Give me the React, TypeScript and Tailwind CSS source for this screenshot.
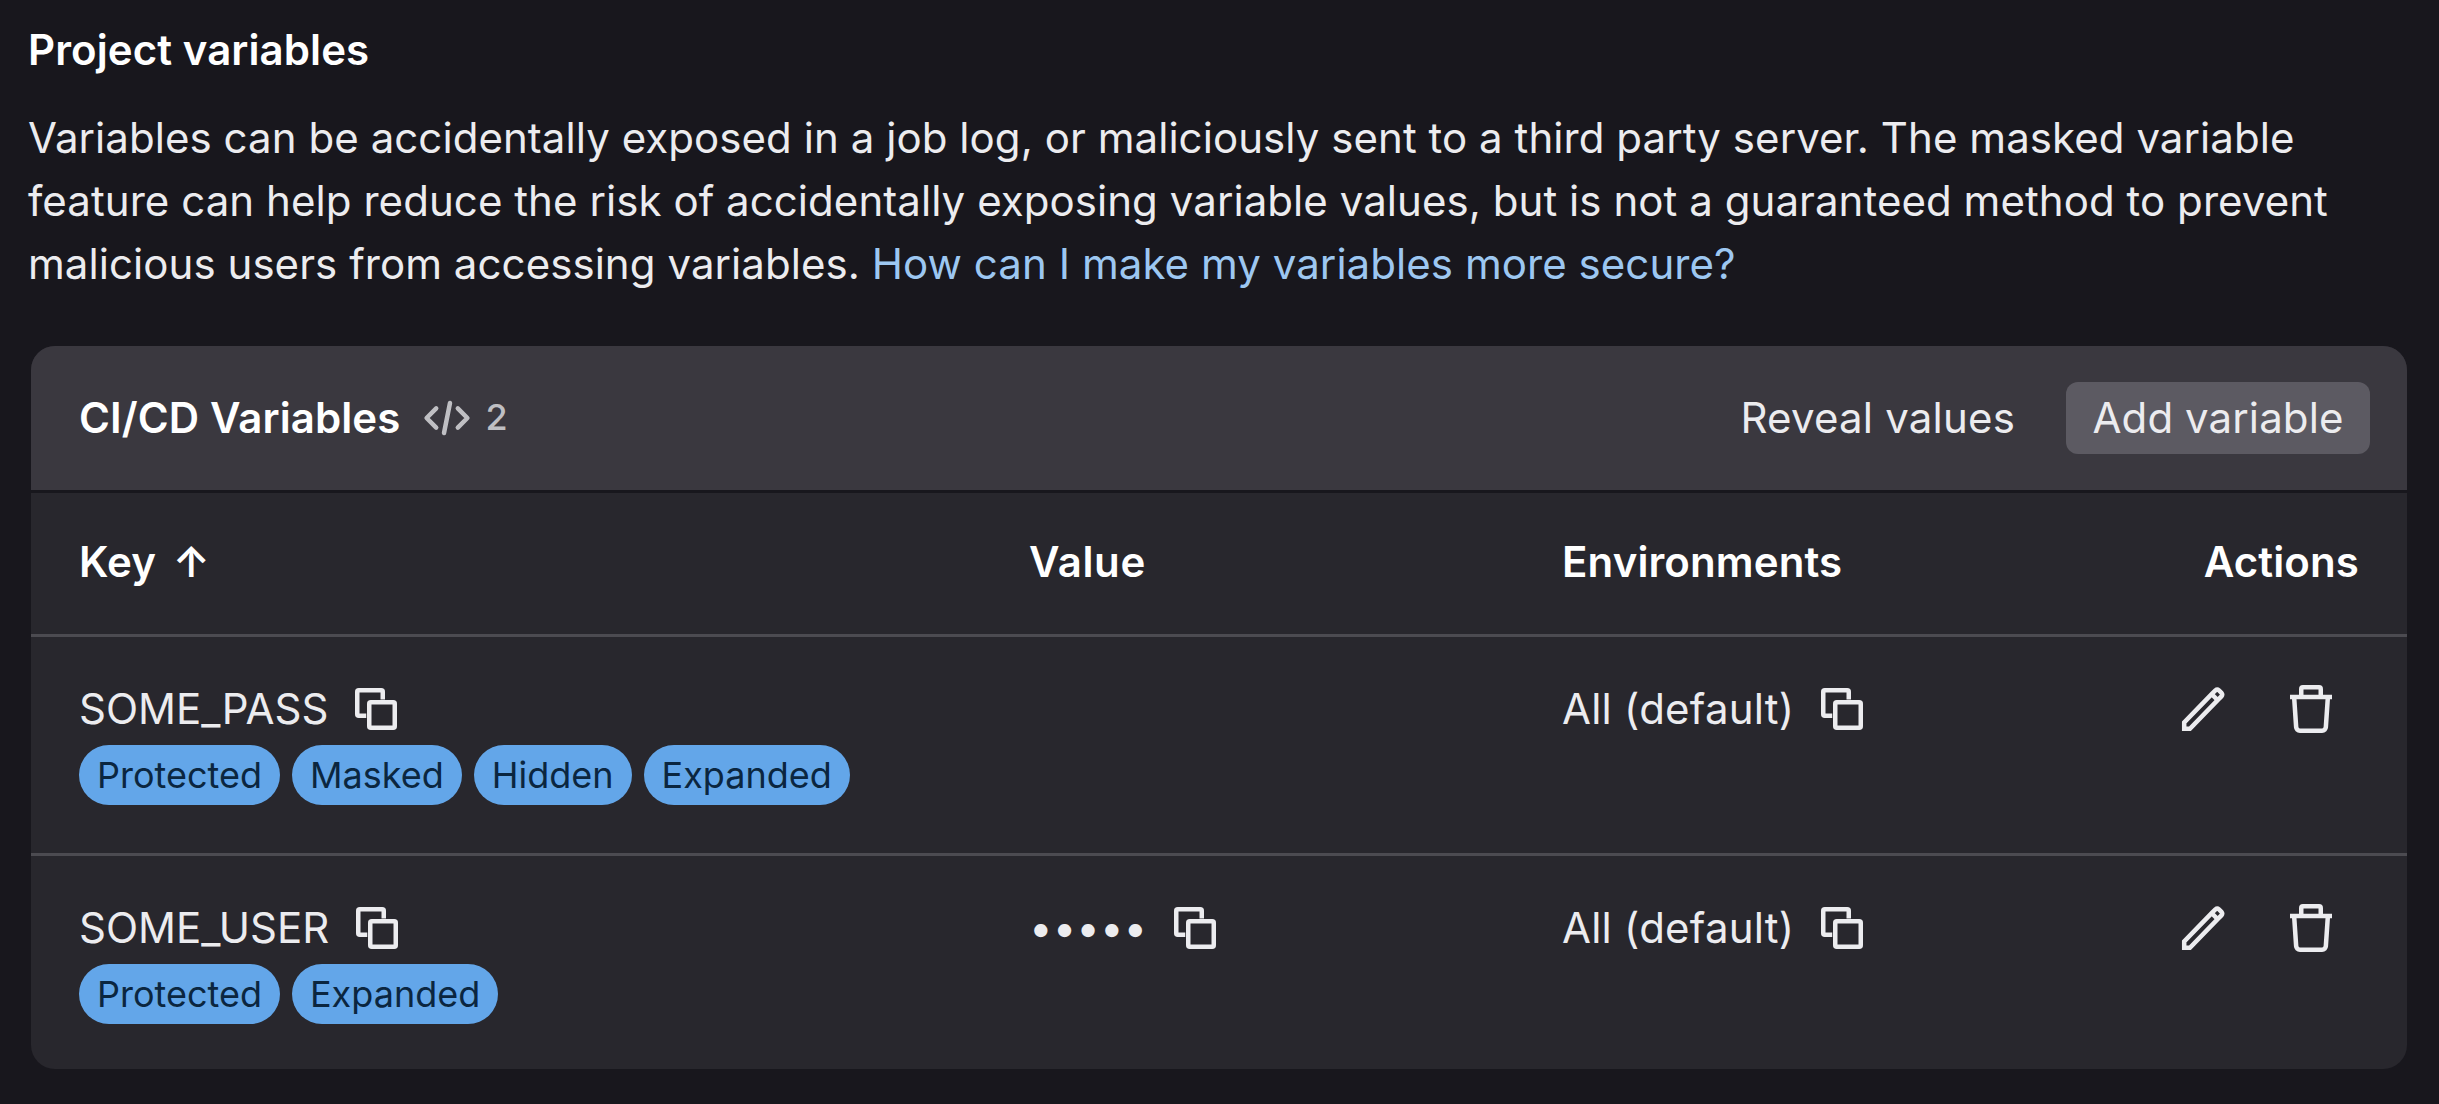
import React from "react";

function CopyIcon() {
  return (
    <svg viewBox="0 0 16 16" fill="none" stroke="#ececef" strokeWidth="1.5" className="w-[48px] h-[48px] shrink-0">
      <rect x="5.75" y="5.75" width="8.5" height="8.5" rx="0.5" />
      <path d="M10.25 4.8V2.25a.5.5 0 0 0-.5-.5h-7.5a.5.5 0 0 0-.5.5v7.5c0 .3.2.5.5.5h2.5" />
    </svg>
  );
}

function PencilIcon() {
  return (
    <svg viewBox="0 0 16 16" fill="none" stroke="#ececef" strokeWidth="1.5" className="w-[48px] h-[48px] shrink-0">
      <path d="M1.4 14.6v-2.1l9.4-9.7 1-1c.4-.35.8-.35 1.2 0l.8.8c.35.4.35.8 0 1.2l-1 1-9.5 9.8H1.4Z" strokeLinejoin="miter" />
      <path d="M10.5 3l2.4 2.4" />
    </svg>
  );
}

function TrashIcon() {
  return (
    <svg viewBox="0 0 16 16" fill="none" stroke="#ececef" strokeWidth="1.5" className="w-[48px] h-[48px] shrink-0">
      <path d="M4.75 3.9V1.3c0-.3.2-.55.55-.55h5.4c.35 0 .55.25.55.55v2.6" />
      <path d="M1 4h14" />
      <path d="M2.4 4.4l.65 9.6c.05.7.55 1.25 1.25 1.25h7.4c.7 0 1.2-.55 1.25-1.25l.65-9.6" />
    </svg>
  );
}

function CodeIcon() {
  return (
    <svg viewBox="0 0 16 16" fill="none" stroke="#bfbfc3" strokeWidth="1.5" strokeLinecap="round" strokeLinejoin="round" className="w-[48px] h-[48px] shrink-0">
      <path d="M4.4 4.8L1.2 8l3.2 3.2" />
      <path d="M11.6 4.8L14.8 8l-3.2 3.2" />
      <path d="M9 3L7 13" />
    </svg>
  );
}

function Badge({ label }: { label: string }) {
  return (
    <span className="h-[60px] px-[18px] rounded-full bg-[#63a6e9] text-[#0b2640] text-[36px] leading-[60px]">
      {label}
    </span>
  );
}

function Row({
  name,
  badges,
  value,
  last,
}: {
  name: string;
  badges: string[];
  value?: string;
  last?: boolean;
}) {
  return (
    <div
      className={`grid grid-cols-[950px_533px_500px_1fr] px-[48px] pt-[40px] ${
        last ? "pb-[45px]" : "pb-[48px] border-b-[3px] border-[#4c4b51]"
      }`}
    >
      <div>
        <div className="flex items-center">
          <span>{name}</span>
          <span className="ml-[24px] flex">
            <CopyIcon />
          </span>
        </div>
        <div className="flex gap-[12px] mt-[5px]">
          {badges.map((b) => (
            <Badge key={b} label={b} />
          ))}
        </div>
      </div>
      <div>
        {value ? (
          <div className="flex items-center">
            <span>{value}</span>
            <span className="ml-[24px] flex">
              <CopyIcon />
            </span>
          </div>
        ) : null}
      </div>
      <div>
        <div className="flex items-center">
          <span className="tracking-[0.23px]">All (default)</span>
          <span className="ml-[24px] flex">
            <CopyIcon />
          </span>
        </div>
      </div>
      <div className="flex justify-end gap-[59px] pr-[24px] h-[63px] items-center">
        <PencilIcon />
        <TrashIcon />
      </div>
    </div>
  );
}

export default function App() {
  return (
    <div className="h-screen overflow-hidden bg-[#18171d] text-[#ececef] text-[42px] leading-[63px] [font-family:Inter,sans-serif]">
      <div className="pl-[28px] pr-[32px] pt-[24px]">
        <h2 className="font-semibold text-white leading-[52px] mb-[30px] tracking-[0.08px]">Project variables</h2>
        <p className="mb-[51px] tracking-[0.06px]">
          Variables can be accidentally exposed in a job log, or maliciously sent to a third party server. The masked
          variable feature can help reduce the risk of accidentally exposing variable values, but is not a guaranteed
          method to prevent malicious users from accessing variables.{" "}
          <a className="text-[#9dc7f1]">How can I make my variables more secure?</a>
        </p>
      </div>
      <div className="ml-[31px] mr-[32px] rounded-[24px] overflow-hidden bg-[#28272d]">
        <div className="h-[147px] bg-[#3a383f] border-b-[3px] border-[#18171d] flex items-center justify-between pl-[48px] pr-[37px] pb-[1px]">
          <div className="flex items-center">
            <span className="font-semibold text-white tracking-[0.1px]">CI/CD Variables</span>
            <span className="ml-[23px] flex items-center text-[#bfbfc3] text-[36px] font-medium">
              <CodeIcon />
              <span className="ml-[14px]">2</span>
            </span>
          </div>
          <div className="flex items-center gap-[24px]">
            <button className="h-[72px] px-[27px] rounded-[12px] text-[#ececef] tracking-[0.2px]">Reveal values</button>
            <button className="h-[72px] w-[304px] rounded-[12px] bg-[#5c5a62] text-[#ececef] tracking-[0.1px]">Add variable</button>
          </div>
        </div>
        <div className="grid grid-cols-[950px_533px_500px_1fr] items-center h-[144px] px-[48px] pb-[4px] border-b-[3px] border-[#4c4b51] font-semibold text-white tracking-[0.1px]">
          <div>
            Key <span className="ml-[6px]">↑</span>
          </div>
          <div className="tracking-[0.6px]">Value</div>
          <div>Environments</div>
          <div className="text-right">Actions</div>
        </div>
        <Row name="SOME_PASS" badges={["Protected", "Masked", "Hidden", "Expanded"]} />
        <Row name="SOME_USER" badges={["Protected", "Expanded"]} value="•••••" last />
      </div>
    </div>
  );
}
